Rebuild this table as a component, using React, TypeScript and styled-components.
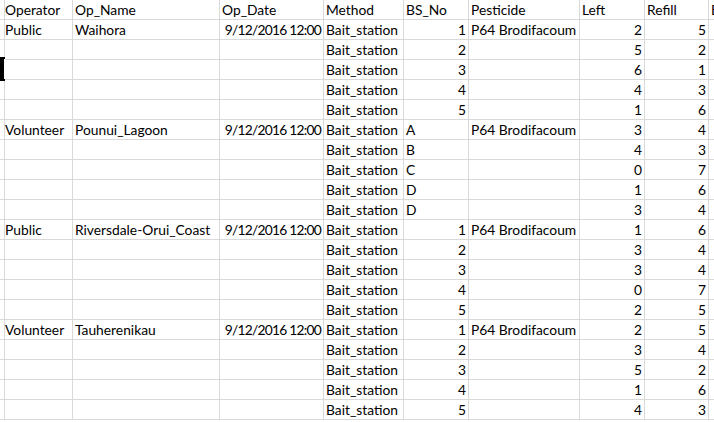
import React from "react";
import styled, { createGlobalStyle } from "styled-components";

const Global = createGlobalStyle`
  html, body { margin: 0; padding: 0; background: #fff; overflow: hidden; }
  body { font-family: "Lato", "Liberation Sans", sans-serif; }
`;

const COLS = [3, 70, 147, 104, 80, 65, 111, 65, 64, 40];

const Sheet = styled.div`
  position: relative;
  width: 714px;
  height: 422px;
  overflow: hidden;
`;

const Grid = styled.div`
  display: grid;
  grid-template-columns: ${COLS.map((c) => c + "px").join(" ")};
  grid-auto-rows: 20px;
`;

const Cell = styled.div<{ $align?: "left" | "right" }>`
  box-sizing: border-box;
  border-right: 1px solid #d9d9d9;
  border-bottom: 1px solid #d9d9d9;
  font-size: 13.8px;
  color: #000;
  line-height: 20px;
  white-space: nowrap;
  overflow: visible;
  padding: 0 2px 0 2px;
  text-align: ${(p) => (p.$align === "right" ? "right" : "left")};
  position: relative;
`;

const DateText = styled.span`
  letter-spacing: -0.75px;
`;

const Cursor = styled.svg`
  position: absolute;
  left: 0;
  top: 57px;
`;

type Row = (string | number)[];

const header = ["", "Operator", "Op_Name", "Op_Date", "Method", "BS_No", "Pesticide", "Left", "Refill", "E"];

const groups: { op: string; name: string; bs: (string | number)[]; left: number[]; refill: number[] }[] = [
  { op: "Public", name: "Waihora", bs: [1, 2, 3, 4, 5], left: [2, 5, 6, 4, 1], refill: [5, 2, 1, 3, 6] },
  { op: "Volunteer", name: "Pounui_Lagoon", bs: ["A", "B", "C", "D", "D"], left: [3, 4, 0, 1, 3], refill: [4, 3, 7, 6, 4] },
  { op: "Public", name: "Riversdale-Orui_Coast", bs: [1, 2, 3, 4, 5], left: [1, 3, 3, 0, 2], refill: [6, 4, 4, 7, 5] },
  { op: "Volunteer", name: "Tauherenikau", bs: [1, 2, 3, 4, 5], left: [2, 3, 5, 1, 4], refill: [5, 4, 2, 6, 3] },
];

const rows: Row[] = [];
groups.forEach((g) => {
  g.bs.forEach((b, i) => {
    rows.push([
      "",
      i === 0 ? g.op : "",
      i === 0 ? g.name : "",
      i === 0 ? "9/12/2016 12:00" : "",
      "Bait_station",
      b,
      i === 0 ? "P64 Brodifacoum" : "",
      g.left[i],
      g.refill[i],
      "",
    ]);
  });
});

export default function App() {
  return (
    <Sheet>
      <Global />
      <Grid>
        {header.map((h, i) => (
          <Cell key={"h" + i}>{h}</Cell>
        ))}
        {rows.map((r, ri) =>
          r.map((v, ci) => {
            const right = typeof v === "number" || ci === 3;
            return (
              <Cell key={ri + "-" + ci} $align={right ? "right" : "left"}>
                {ci === 3 && v ? <DateText>{v}</DateText> : v}
              </Cell>
            );
          })
        )}
      </Grid>
      <Cursor width="6" height="24" viewBox="0 0 6 24">
        <rect x="0" y="1" width="4" height="22" fill="#000" />
        <rect x="4" y="1" width="1" height="22" fill="#fff" />
        <rect x="0" y="0" width="5" height="2" fill="#000" />
        <rect x="0" y="22" width="5" height="2" fill="#000" />
      </Cursor>
    </Sheet>
  );
}
